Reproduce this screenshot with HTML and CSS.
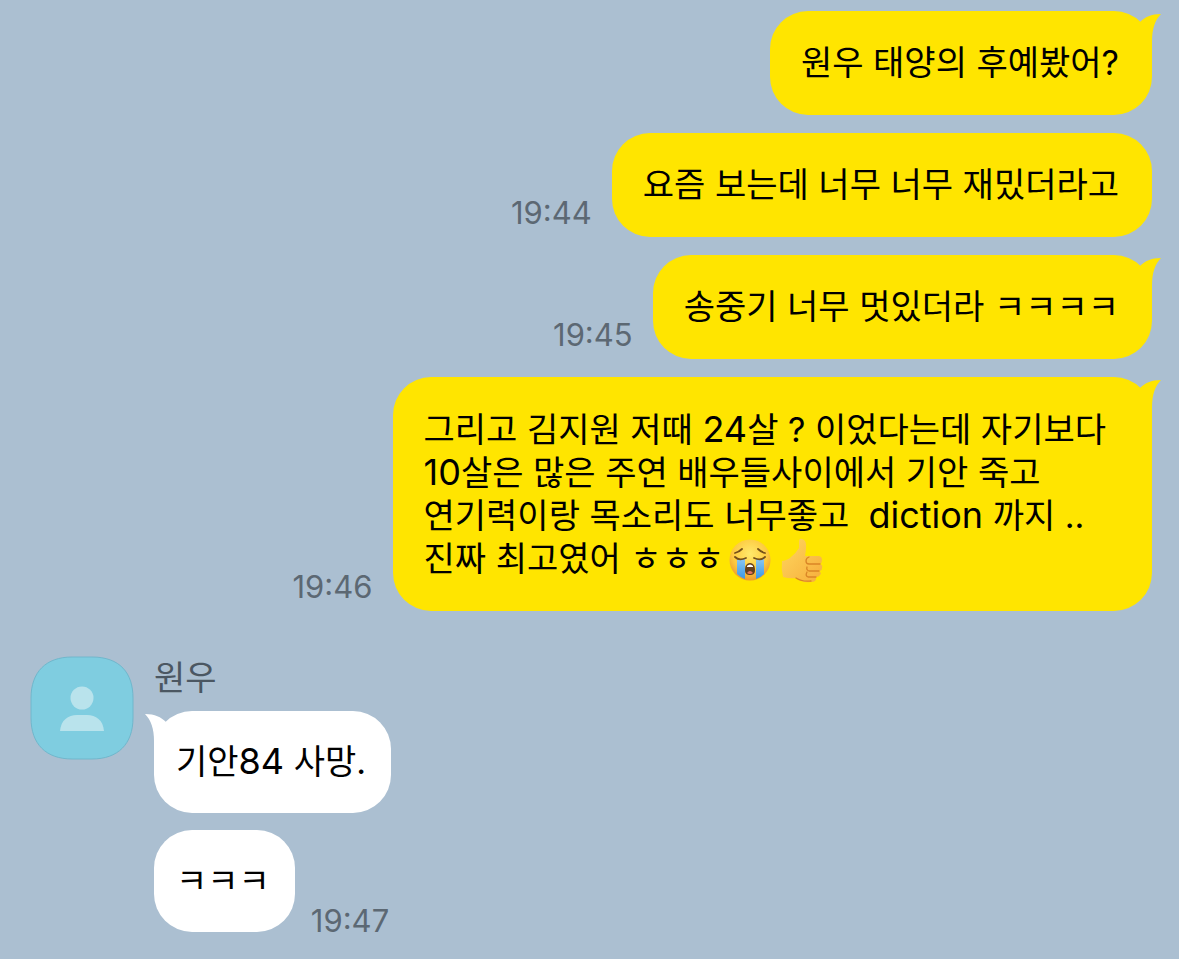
FILE: index.html
```
<!DOCTYPE html>
<html lang="ko">
<head>
    <meta charset="UTF-8">
    <meta name="viewport" content="width=device-width, initial-scale=1">
    <title>원우</title>
    <link rel="stylesheet" href="styles.css">
</head>
<body>
<main class="chat">
    <ol class="msgs mine">
        <li class="msg">
            <p class="bubble">원우 태양의 후예봤어?
                <svg class="tail" viewBox="0 0 24 36" aria-hidden="true"><path d="M3 8C8 3 14 0 24 0C18 6 15 15 15 27V36H0V10Z"/></svg>
            </p>
        </li>
        <li class="msg">
            <time>19:44</time>
            <p class="bubble">요즘 보는데 너무 너무 재밌더라고</p>
        </li>
        <li class="msg">
            <time>19:45</time>
            <p class="bubble">송중기 너무 멋있더라 ㅋㅋㅋㅋ
                <svg class="tail" viewBox="0 0 24 36" aria-hidden="true"><path d="M3 8C8 3 14 0 24 0C18 6 15 15 15 27V36H0V10Z"/></svg>
            </p>
        </li>
        <li class="msg">
            <time>19:46</time>
            <p class="bubble long">그리고 김지원 저때 <span class="en">24</span>살 ? 이었다는데 자기보다<br><span class="en">10</span>살은 많은 주연 배우들사이에서 기안 죽고<br>연기력이랑 목소리도 너무좋고&nbsp; <span class="en">diction</span> 까지 ..<br>진짜 최고였어 ㅎㅎㅎ<svg class="emoji" viewBox="0 0 42 42" role="img" aria-label="엉엉 우는 얼굴">
                    <defs>
                        <radialGradient id="face" cx="50%" cy="35%" r="65%">
                            <stop offset="0" stop-color="#ffe96b"/>
                            <stop offset="0.65" stop-color="#fdc93f"/>
                            <stop offset="1" stop-color="#ee9a2b"/>
                        </radialGradient>
                        <linearGradient id="tear" x1="0" y1="0" x2="0" y2="1">
                            <stop offset="0" stop-color="#8ac6f2"/>
                            <stop offset="1" stop-color="#3a97e4"/>
                        </linearGradient>
                    </defs>
                    <circle cx="21" cy="21" r="20.5" fill="url(#face)"/>
                    <path d="M8 20H16V40Q11 38 8 35ZM27 20H35V35Q31 39 27 40Z" fill="url(#tear)"/>
                    <path d="M6 18Q10 22 17 19M25 19Q32 22 36 18M6 14Q10 13 13 10M29 10Q32 13 36 14" fill="none" stroke="#765018" stroke-width="1.8" stroke-linecap="round"/>
                    <path d="M21 24C25 24 26 28 26 31C26 35 24 36 21 36C18 36 16 35 16 31C16 28 17 24 21 24Z" fill="#66401b"/>
                    <path d="M18 27Q21 24 24 27V28H18Z" fill="#fff"/>
                    <path d="M18 34Q21 30 24 34Q21 36 18 34Z" fill="#e8745b"/>
                </svg><svg class="emoji" viewBox="0 0 42 42" role="img" aria-label="엄지 척">
                    <defs>
                        <linearGradient id="hand" x1="0" y1="0" x2="1" y2="1">
                            <stop offset="0" stop-color="#ffd75e"/>
                            <stop offset="1" stop-color="#f6ad3c"/>
                        </linearGradient>
                    </defs>
                    <path d="M1 22Q7 21 10 18Q15 14 18 9V3Q18 -1 21 0Q26 1 25 10L24 17H37Q41 17 41 21Q41 24 39 25Q42 26 41 29Q41 32 38 32Q41 34 39 36Q38 38 35 38Q36 43 30 43Q21 44 15 39Q9 40 2 38Q0 30 1 22Z" fill="url(#hand)"/>
                    <path d="M39 25H28Q25 25 25 22Q25 19 28 18M38 32H28Q25 31 26 28M35 38H27Q24 37 26 33M15 39Q21 43 30 42" fill="none" stroke="#da8526" stroke-width="1.3" stroke-linecap="round"/>
                </svg>
                <svg class="tail" viewBox="0 0 24 36" aria-hidden="true"><path d="M3 8C8 3 14 0 24 0C18 6 15 15 15 27V36H0V10Z"/></svg>
            </p>
        </li>
    </ol>

    <section class="friend">
        <svg class="avatar" viewBox="0 0 104 104" aria-hidden="true">
            <path class="avatar-bg" d="M42 1H62C90 1 103 17 103 42V62C103 88 88 103 62 103H42C16 103 1 88 1 62V42C1 16 16 1 42 1Z"/>
            <g class="avatar-man">
                <circle cx="52" cy="42" r="11.5"/>
                <path d="M30 75C31 64 38 59 47 59H57C66 59 73 64 74 75Z"/>
            </g>
        </svg>
        <div>
            <h2 class="name">원우</h2>
            <ol class="msgs theirs">
                <li class="msg">
                    <p class="bubble">기안<span class="en">84</span> 사망.
                        <svg class="tail" viewBox="0 0 24 36" aria-hidden="true"><path d="M3 8C8 3 14 0 24 0C18 6 15 15 15 27V36H0V10Z"/></svg>
                    </p>
                </li>
                <li class="msg">
                    <p class="bubble">ㅋㅋㅋ</p>
                    <time>19:47</time>
                </li>
            </ol>
        </div>
    </section>
</main>
</body>
</html>
```
FILE: styles.css
```
*{
    margin: 0;
    padding: 0;
    box-sizing: border-box;
}
body
{
    background-color: #abbfd1;
    color: #000;
    font-family: Inter, "Noto Sans CJK KR", sans-serif;
    font-size: 34px;
    line-height: 43px;
}
.chat
{
    padding: 11px 27px 26px 30px;
}
.msgs
{
    list-style: none;
    display: flex;
    flex-direction: column;
    gap: 18px;
}
.msg
{
    display: flex;
    align-items: flex-end;
    gap: 20px;
}
.mine .msg
{
    justify-content: flex-end;
}
.bubble
{
    position: relative;
    padding: 30px 33px 31px 31px;
    border-radius: 38px;
    background-color: #ffe500;
}
.long
{
    padding-top: 31px;
    padding-right: 46px;
}
/*영문, 숫자는 조금 크게*/
.en
{
    font-size: 36px;
    line-height: 40px;
}
/*말풍선 꼬리*/
.tail
{
    position: absolute;
    top: 3px;
    right: -9px;
    width: 24px;
    height: 36px;
    fill: #ffe500;
}
time
{
    padding-bottom: 4px;
    color: #5c6873;
    font-size: 31px;
    line-height: 40px;
}
.emoji
{
    width: 42px;
    height: 42px;
    margin: -10px 5px;
    vertical-align: baseline;
    overflow: visible;
}

/*상대방 메시지*/
.friend
{
    display: flex;
    align-items: flex-start;
    gap: 20px;
    margin-top: 45px;
}
.avatar
{
    flex: none;
    width: 104px;
    height: 104px;
}
.avatar-bg
{
    fill: #7fcde0;
    stroke: #70b7cc;
    stroke-width: 1;
}
.avatar-man
{
    fill: #b9e3ec;
}
.name
{
    margin-bottom: 12px;
    color: #4b5762;
    font-size: 34px;
    font-weight: 400;
}
.theirs
{
    gap: 17px;
}
.theirs .msg
{
    gap: 16px;
}
.theirs .bubble
{
    padding: 29px 25px 30px 22px;
    background-color: #fff;
}
.theirs .tail
{
    right: auto;
    left: -9px;
    fill: #fff;
    transform: scaleX(-1);
}
.theirs time
{
    padding-bottom: 0;
    margin-bottom: -9px;
}
```
